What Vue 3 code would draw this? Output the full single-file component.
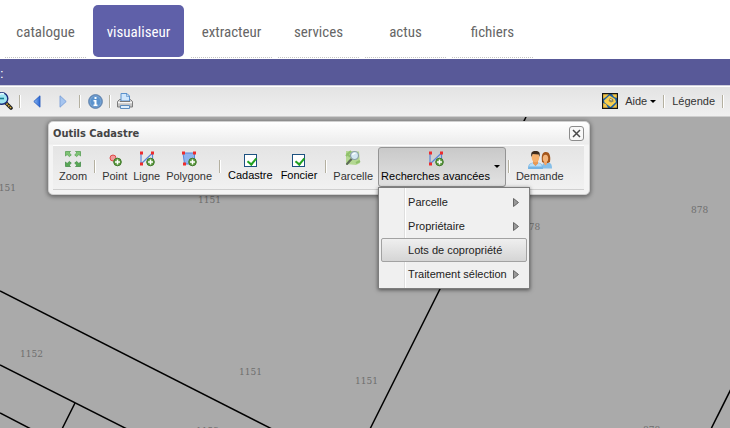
<script setup>
import { ref } from 'vue'

const tabs = ['catalogue', 'visualiseur', 'extracteur', 'services', 'actus', 'fichiers']
const activeTab = ref('visualiseur')

const cadastre = ref(true)
const foncier = ref(true)

const menu = [
  { label: 'Parcelle', sub: true },
  { label: 'Propriétaire', sub: true },
  { label: 'Lots de copropriété', sub: false },
  { label: 'Traitement sélection', sub: true },
]
const highlighted = ref('Lots de copropriété')

const lines = [
  [0, 174, 272, 312],
  [0, 248, 127, 312],
  [0, 296, 31, 312],
  [75, 286, 62, 312],
  [526, 0, 370, 312],
  [731, 272, 711, 312],
]
const parcels = [
  { x: -7, y: 74, n: '1151' },
  { x: 198, y: 86, n: '1151' },
  { x: 523, y: 113, n: '878' },
  { x: 691, y: 96, n: '878' },
  { x: 20, y: 240, n: '1152' },
  { x: 239, y: 258, n: '1151' },
  { x: 355, y: 267, n: '1151' },
  { x: 196, y: 317, n: '1153' },
  { x: 643, y: 316, n: '878' },
]
</script>

<template>
  <div class="page">
    <nav class="tabs">
      <a v-for="t in tabs" :key="t" href="#" class="tab" :class="{ active: t === activeTab }" @click.prevent="activeTab = t">{{ t }}</a>
    </nav>
    <div class="band">:</div>

    <div class="toolbar">
      <div class="group">
        <button class="tool first" aria-label="Zoom arrière">
          <svg width="16" height="18" viewBox="0 0 16 18">
            <path d="M9 11l5 5" stroke="#222" stroke-width="3.600" stroke-linecap="round" />
            <path d="M9.500 11.500l4.500 4.500" stroke="#e2b63c" stroke-width="1.600" stroke-dasharray="1.500 1" />
            <circle cx="5" cy="6.500" r="5.800" fill="#9fe6f2" stroke="#1c2f7a" stroke-width="1.400" />
            <path d="M1 4a5 5 0 0 1 6-2" stroke="#e4fbff" stroke-width="1.500" fill="none" />
            <path d="M1 6.500h6" stroke="#157d8f" stroke-width="1.600" />
          </svg>
        </button>
        <i class="sep"></i>
        <button class="tool arrow" aria-label="Vue précédente">
          <svg width="8" height="13" viewBox="0 0 8 13">
            <defs><linearGradient id="ga" x1="0" x2="1"><stop offset="0" stop-color="#8fbcf2" /><stop offset="1" stop-color="#2a66d4" /></linearGradient></defs>
            <path d="M7 .8v11.400L.8 6.500z" fill="url(#ga)" stroke="#2a5fc0" stroke-width=".9" stroke-linejoin="round" />
          </svg>
        </button>
        <button class="tool arrow" aria-label="Vue suivante">
          <svg width="8" height="13" viewBox="0 0 8 13">
            <path d="M1 .8v11.400l6.200-5.700z" fill="#a6c5ef" stroke="#7a9fd8" stroke-width=".9" stroke-linejoin="round" />
          </svg>
        </button>
        <i class="sep wide"></i>
        <button class="tool" aria-label="Informations">
          <svg width="15" height="15" viewBox="0 0 15 15">
            <circle cx="7.500" cy="7.500" r="6.900" fill="#4a7db8" stroke="#6c8bb0" />
            <circle cx="7.500" cy="7.500" r="5.600" fill="#5b93cd" stroke="#8fb4da" stroke-width=".8" />
            <path d="M6.500 3h2v2h-2zM5.500 6h3v4.500h1V12h-4v-1.500h1v-3h-1z" fill="#fff" />
          </svg>
        </button>
        <i class="sep"></i>
        <button class="tool" aria-label="Imprimer">
          <svg width="16" height="16" viewBox="0 0 16 16">
            <path d="M2.500 6.500h11l2 2v5.500h-15V8.500z" fill="#c4c4c4" stroke="#7d7d7d" />
            <path d="M1 9.500h14" stroke="#f6f6f6" stroke-width="1.600" />
            <path d="M4 8V.5h6L12.500 3v5z" fill="#cfe6fc" stroke="#5a90cc" />
            <path d="M9.500 1v2.500H12z" fill="#fff" stroke="#5a90cc" stroke-width=".7" />
            <path d="M3 8.500h10" stroke="#777" />
            <path d="M3.500 12.500h9v3h-9z" fill="#dceefd" stroke="#5d8cbd" />
          </svg>
        </button>
      </div>
      <div class="group right">
        <button class="tool text">
          <svg width="16" height="16" viewBox="0 0 16 16">
            <path d="M0 0h16v16H0z" fill="#1f62a5" />
            <path d="M1 1h6L4 4 1 6zM10 1h5v4l-3-1zM1 10l3 1 2 4H1zM15 10v5h-5l3-3z" fill="#f3c545" />
            <path d="M7.500 2.500l5.500 3.500 1 3-5.500 5L2.500 9.500 2 7.500z" fill="#f9cf4e" />
            <path d="M8 5l3 1 .5 2.500L9 9.500 6.500 8z" fill="#8a8560" />
            <path d="M8 6.500l2 .5" stroke="#f4e3a4" />
            <path d="M.5.5h15v15H.5z" fill="none" stroke="#151515" stroke-width="1.300" />
          </svg>
          <span class="label">Aide</span>
          <i class="caret"></i>
        </button>
        <i class="sep"></i>
        <button class="tool text">Légende</button>
        <i class="sep"></i>
      </div>
    </div>

    <main class="map">
      <svg class="plan" aria-hidden="true">
        <line v-for="(l, i) in lines" :key="i" :x1="l[0]" :y1="l[1]" :x2="l[2]" :y2="l[3]" />
        <text v-for="(p, i) in parcels" :key="'p' + i" :x="p.x" :y="p.y">{{ p.n }}</text>
      </svg>

      <section class="window">
        <header class="title">
          <h2>Outils Cadastre</h2>
          <button class="close" aria-label="Fermer">
            <svg width="9" height="9" viewBox="0 0 9 9"><path d="M1 1l7 7M8 1L1 8" stroke="#4a4a4a" stroke-width="1.500" /></svg>
          </button>
        </header>
        <div class="ribbon">
          <button class="item">
            <svg width="18" height="18" viewBox="0 0 18 18">
              <g fill="#7fc474" stroke="#4d9a4a" stroke-width=".7">
                <path d="M1.500 1.500h5L5.200 2.800 7.300 4.900 5.400 6.600 3.100 4.500 1.500 6z" />
                <path d="M16.500 1.500h-5l1.300 1.300-2.100 2.100 1.900 1.700 2.300-2.100L16.500 6z" />
              </g>
              <g fill="#58a854" stroke="#3b8540" stroke-width=".7">
                <path d="M1.500 16.500h5l-1.300-1.300 2.100-2.100-1.900-1.700-2.300 2.100L1.500 12z" />
                <path d="M16.500 16.500h-5l1.300-1.300-2.100-2.100 1.900-1.700 2.300 2.100 1.600-1.500z" />
              </g>
            </svg>
            <span>Zoom</span>
          </button>
          <i class="sep"></i>
          <button class="item">
            <svg width="18" height="18" viewBox="0 0 18 18">
              <circle cx="7" cy="8" r="3" fill="#f09a9a" stroke="#df4a4a" />
              <circle cx="11.500" cy="12" r="3.800" fill="#5e9b40" stroke="#3f7a2b" />
              <path d="M11.500 9.500v5M9 12h5" stroke="#fff" stroke-width="1.500" />
            </svg>
            <span>Point</span>
          </button>
          <button class="item">
            <svg width="18" height="18" viewBox="0 0 18 18">
              <path d="M3 14V3M3 14L14.500 3v11" stroke="#5b86d8" stroke-width="1.200" fill="none" />
              <path d="M2 1.500h3v3H2zM13 1.500h3v3h-3zM2 12.500h3v3H2z" fill="#ee2c2c" />
              <circle cx="12.500" cy="12" r="3.800" fill="#5e9b40" stroke="#3f7a2b" />
              <path d="M12.500 9.500v5M10 12h5" stroke="#fff" stroke-width="1.500" />
            </svg>
            <span>Ligne</span>
          </button>
          <button class="item">
            <svg width="18" height="18" viewBox="0 0 18 18">
              <path d="M3 3h11.500v11H4.500z" fill="#8fb4ee" stroke="#5b86d8" />
              <path d="M2 1.500h3v3H2zM13 1.500h3v3h-3zM3 12.500h3v3H3z" fill="#ee2c2c" />
              <circle cx="12.500" cy="12" r="3.800" fill="#5e9b40" stroke="#3f7a2b" />
              <path d="M12.500 9.500v5M10 12h5" stroke="#fff" stroke-width="1.500" />
            </svg>
            <span>Polygone</span>
          </button>
          <i class="sep"></i>
          <label class="check"><input v-model="cadastre" type="checkbox" /><span>Cadastre</span></label>
          <label class="check"><input v-model="foncier" type="checkbox" /><span>Foncier</span></label>
          <i class="sep"></i>
          <button class="item">
            <svg width="18" height="18" viewBox="0 0 18 18">
              <path d="M2 1l13 .5 1 11.500-4 2-10-1z" fill="#b4d892" />
              <path d="M2 6l5-5M4 12l4-3M12 13l4-2M3 3l3 4" stroke="#8fc06a" stroke-width="2" />
              <path d="M7.500 9L3 14" stroke="#5d6b57" stroke-width="2" stroke-linecap="round" />
              <circle cx="10.500" cy="5.500" r="4" fill="#d3e8f2" stroke="#8da1a8" stroke-width="1.200" />
              <path d="M8.500 5a3 3 0 0 1 3-1.500" stroke="#fff" stroke-width="1.300" fill="none" />
            </svg>
            <span>Parcelle</span>
          </button>
          <div class="dropdown">
            <button class="drop-button" aria-haspopup="menu" aria-expanded="true">
              <span class="stack">
                <svg width="18" height="18" viewBox="0 0 18 18">
                  <path d="M3 14V3M3 14L14.500 3v11" stroke="#5b86d8" stroke-width="1.200" fill="none" />
                  <path d="M2 1.500h3v3H2zM13 1.500h3v3h-3zM2 12.500h3v3H2z" fill="#ee2c2c" />
                  <circle cx="12.500" cy="12" r="3.800" fill="#5e9b40" stroke="#3f7a2b" />
                  <path d="M12.500 9.500v5M10 12h5" stroke="#fff" stroke-width="1.500" />
                </svg>
                <span>Recherches avancées</span>
              </span>
              <i class="caret"></i>
            </button>
            <ul class="menu" role="menu">
              <li v-for="m in menu" :key="m.label" role="none">
                <button role="menuitem" class="entry" :class="{ on: m.label === highlighted }" @mouseenter="highlighted = m.label">
                  <span>{{ m.label }}</span>
                  <svg v-if="m.sub" width="6" height="9" viewBox="0 0 6 9"><path d="M.5.5v8l5-4z" fill="#999" stroke="#666" /></svg>
                </button>
              </li>
            </ul>
          </div>
          <i class="sep"></i>
          <button class="item">
            <svg class="people" width="26" height="20" viewBox="0 0 26 20">
              <path d="M15 18.500c0-5 1-6 5-6s5 2 5 6z" fill="#86bfe8" />
              <path d="M15 12c-1-8 1-10 4-10s5 3 4 10l-2 1h-4z" fill="#a4561b" />
              <ellipse cx="18.500" cy="8.500" rx="2.700" ry="3.800" fill="#f3b47a" />
              <path d="M17 12h3v2l-1.500 1.500L17 14z" fill="#efa468" />
              <path d="M1 19c0-5 2-6.500 7.500-6.500S16 14 16 19z" fill="#74b4e4" />
              <path d="M2 16.500c1-3 2-3.500 4-3.500l2.500 3L11 13c2 0 3 .5 4 3.500" fill="#b8def8" />
              <path d="M6 11h5v2.500L8.500 16 6 13.500z" fill="#e89a58" />
              <ellipse cx="8.500" cy="7.500" rx="3.800" ry="4.800" fill="#f5b06c" />
              <path d="M4.500 7C3.500 2.500 5 1 8.500 1s5 1.500 4 6l-.8-2.500-6-.5z" fill="#3e2c1e" />
            </svg>
            <span>Demande</span>
          </button>
        </div>
      </section>
    </main>
  </div>
</template>

<style>
body { margin: 0; }
</style>

<style scoped>
* { box-sizing: border-box; }

.page {
  display: flex;
  flex-direction: column;
  min-height: 100vh;
  overflow: hidden;
  background: #fff;
  font-family: "Liberation Sans", Arial, sans-serif;
  font-size: 11px;
  line-height: 13px;
  color: #333;
}
button {
  margin: 0;
  padding: 0;
  border: 0;
  background: none;
  font: inherit;
  color: inherit;
}
svg { display: block; flex: none; }

.tabs {
  display: flex;
  gap: 6px;
  padding: 5px 5px 1px;
}
.tab {
  width: 81px;
  height: 53px;
  border-bottom: 1px dotted #c4c4c4;
  font-family: "Roboto Condensed", "Liberation Sans Narrow", sans-serif;
  font-size: 15px;
  line-height: 55px;
  text-align: center;
  text-decoration: none;
  color: #666;
}
.tab.active {
  width: 91px;
  height: 52px;
  margin: 0 1px;
  border: 0;
  border-radius: 5px;
  background: #5f60a9;
  color: #fff;
}
.band {
  height: 26px;
  background: #585998;
  color: #fff;
  font-size: 13px;
  line-height: 30px;
}

.toolbar {
  display: flex;
  justify-content: space-between;
  height: 32px;
  border-top: 1px solid #d0d0dc;
  border-bottom: 1px solid #cfcfcf;
  box-shadow: inset 0 1px #fff;
  background: linear-gradient(#e3e3e3, #f0f0f0);
}
.group { display: flex; align-items: center; }
.sep {
  flex: none;
  width: 2px;
  height: 13px;
  border-left: 1px solid #b4b0a0;
  border-right: 1px solid #fff;
}
.tool { display: flex; align-items: center; }
.group .sep { margin: 0 6px; }
.tool.first { margin-left: -3px; }
.tool.first + .sep { margin-right: 12px; }
.tool.arrow + .tool.arrow { margin-left: 18px; }
.group .sep.wide { margin: 0 7px 0 12px; }
.right .sep:nth-child(n) { margin: 0 7px; }
.right .sep:last-child { margin-right: 6px; }
.label { margin: 0 3px 0 7px; }
.caret {
  border: 3px solid transparent;
  border-top-color: #000;
  border-bottom: 0;
}

.map {
  position: relative;
  flex: 1;
  min-height: 300px;
  background: #aaa;
}
.plan {
  position: absolute;
  inset: 0;
  width: 100%;
  height: 100%;
}
.plan line { stroke: #000; stroke-width: 1.5; }
.plan text {
  fill: #6e6e6e;
  font-family: "DejaVu Serif", serif;
  font-size: 9px;
}

.window {
  position: absolute;
  left: 48px;
  top: 4px;
  padding: 0 5px 4px 4px;
  border: 1px solid #d0d0d0;
  border-radius: 5px;
  background: linear-gradient(#fff, #ececec 22px, #f4f4f4 23px);
  box-shadow: 0 1px 4px 1px rgba(0, 0, 0, .4);
}
.title {
  display: flex;
  justify-content: space-between;
  align-items: center;
  height: 23px;
}
.title h2 {
  margin: 0;
  font-family: "DejaVu Sans Condensed", "DejaVu Sans", sans-serif;
  font-size: 11px;
  font-weight: bold;
  color: #444;
}
.close {
  display: grid;
  place-items: center;
  width: 15px;
  height: 15px;
  border: 1px solid #8c8c8c;
  border-radius: 3px;
  background: #f8f8f8;
}
.ribbon {
  display: flex;
  align-items: center;
  height: 45px;
  padding: 0 17px 2px 3px;
  border-top: 1px solid #fff;
  border-bottom: 1px solid #cfcfcf;
  background: linear-gradient(#e4e4e4, #f1f1f1);
}
.ribbon > .sep { margin: 0 3px 0 4px; }
.item, .check, .stack {
  display: flex;
  flex-direction: column;
  align-items: center;
  gap: 2px;
  white-space: nowrap;
}
.item { height: 40px; padding: 3px 3px 0; }
.people { margin-bottom: -2px; }
.check {
  height: 40px;
  padding: 7px 4px 0;
  color: #000;
}
.check input {
  appearance: none;
  width: 13px;
  height: 13px;
  margin: 0;
  border: 1px solid #1c5180;
  background: #fff;
}
.check input:checked::after {
  content: "";
  display: block;
  width: 4px;
  height: 7px;
  margin: 1px 0 0 4px;
  border: solid #21a121;
  border-width: 0 2px 2px 0;
  transform: rotate(40deg);
}

.dropdown { position: relative; margin-left: 2px; }
.dropdown + .sep:nth-child(n) { margin-left: 2px; }
.drop-button {
  display: flex;
  align-items: center;
  gap: 4px;
  height: 40px;
  padding: 0 5px 0 2px;
  border: 1px solid #949494;
  border-radius: 3px;
  background: linear-gradient(#c9c9c9, #e2e2e2);
  color: #000;
}
.menu {
  position: absolute;
  z-index: 1;
  left: 0;
  top: 100%;
  width: 152px;
  margin: 0;
  padding: 2px;
  border: 1px solid #7d7d7d;
  background: linear-gradient(90deg, #f0f0f0 25px, #dedede 25px 26px, #fff 26px 27px, #f0f0f0 27px);
  box-shadow: 0 1px 4px rgba(0, 0, 0, .55);
  list-style: none;
}
.entry {
  display: flex;
  justify-content: space-between;
  align-items: center;
  width: 100%;
  height: 24px;
  padding: 1px 7px 0 26px;
  border: 1px solid transparent;
  border-radius: 2px;
  color: #222;
}
.entry.on {
  border-color: #a2a2a2;
  background: linear-gradient(#efefef, #d5d5d5);
}
</style>
